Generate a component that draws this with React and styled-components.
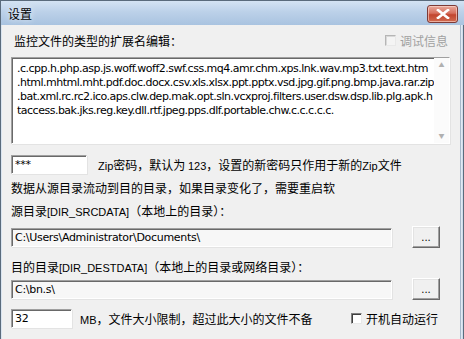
import React from 'react';
import styled, { createGlobalStyle } from 'styled-components';

const GlobalStyle = createGlobalStyle`
  html, body { margin: 0; padding: 0; background: #f0f0f0; }
  body { font-family: "Noto Sans CJK SC", "Liberation Sans", sans-serif; font-size: 12px; color: #000; }
`;

const extLines = [
  '.c.cpp.h.php.asp.js.woff.woff2.swf.css.mq4.amr.chm.xps.lnk.wav.mp3.txt.text.htm',
  '.html.mhtml.mht.pdf.doc.docx.csv.xls.xlsx.ppt.pptx.vsd.jpg.gif.png.bmp.java.rar.zip',
  '.bat.xml.rc.rc2.ico.aps.clw.dep.mak.opt.sln.vcxproj.filters.user.dsw.dsp.lib.plg.apk.h',
  'taccess.bak.jks.reg.key.dll.rtf.jpeg.pps.dlf.portable.chw.c.c.c.c.c.',
];

export default function App() {
  return (
    <>
      <GlobalStyle />
      <Window>
        <TitleBar>
          <Title>设置</Title>
          <CloseButton>
            <svg width="14" height="10" viewBox="0 0 14 10">
              <path d="M2 1 L12 9 M12 1 L2 9" stroke="#fff" strokeWidth="2.6" strokeLinecap="square" />
            </svg>
          </CloseButton>
        </TitleBar>
        <Body>
          <Content>
            <HeaderRow>
              <span>监控文件的类型的扩展名编辑：</span>
              <CheckLabel disabled>
                <Box disabled />
                调试信息
              </CheckLabel>
            </HeaderRow>
            <ExtBox>
              <ExtText>
                {extLines.map((l) => (
                  <div key={l}>{l}</div>
                ))}
              </ExtText>
              <ScrollBar>
                <Arrow>▲</Arrow>
                <Arrow>▼</Arrow>
              </ScrollBar>
            </ExtBox>
            <Row $top={11}>
              <Field $w={76} $white value="***" readOnly />
              <Note $ml={11}>
                <Latin>Zip</Latin>密码，默认为 <Latin>123</Latin>，设置的新密码只作用于新的<Latin>Zip</Latin>文件
              </Note>
            </Row>
            <Line $top={5}>数据从源目录流动到目的目录，如果目录变化了，需要重启软</Line>
            <Line $top={5}>
              源目录<Latin>[DIR_SRCDATA]</Latin>（本地上的目录）：
            </Line>
            <Row $top={6}>
              <Field $w={381} value="C:\Users\Administrator\Documents\" readOnly />
              <DotsButton>...</DotsButton>
            </Row>
            <Line $top={10}>
              目的目录<Latin>[DIR_DESTDATA]</Latin>（本地上的目录或网络目录）：
            </Line>
            <Row $top={2}>
              <Field $w={381} value="C:\bn.s\" readOnly />
              <DotsButton>...</DotsButton>
            </Row>
            <Row $top={9}>
              <Field $w={61} $white value="32" readOnly />
              <Note $ml={8}>
                <Latin>MB</Latin>，文件大小限制，超过此大小的文件不备
              </Note>
              <CheckLabel $ml="auto">
                <Box />
                开机自动运行
              </CheckLabel>
            </Row>
          </Content>
          <RightFrame />
        </Body>
      </Window>
    </>
  );
}

const Window = styled.div`
  width: 464px;
  height: 339px;
  display: flex;
  flex-direction: column;
  overflow: hidden;
  background: #f0f0f0;
  border-left: 1px solid #5a6b7c;
  box-sizing: border-box;
`;

const TitleBar = styled.div`
  height: 25px;
  flex: none;
  display: flex;
  align-items: center;
  justify-content: space-between;
  padding: 0 6px 0 7px;
  background: linear-gradient(180deg, #d4e3f3 0%, #bcd1e9 45%, #a9c3e0 100%);
  border-top: 1px solid #5a6b7c;
  box-sizing: border-box;
`;

const Title = styled.span`
  font-size: 12px;
  color: #000;
  text-shadow: 0 0 6px #fff;
`;

const CloseButton = styled.div`
  width: 29px;
  height: 16px;
  margin-top: 1px;
  display: flex;
  align-items: center;
  justify-content: center;
  border: 1px solid #7d3a36;
  border-radius: 3px;
  background: linear-gradient(180deg, #e9a99c 0%, #d7705e 45%, #c2452f 55%, #d06b50 100%);
  box-shadow: inset 0 0 0 1px rgba(255, 220, 210, 0.6);
`;

const Body = styled.div`
  flex: 1;
  display: flex;
`;

const Content = styled.div`
  flex: 1;
  display: flex;
  flex-direction: column;
  padding: 5px 10px 0 9px;
  border-left: 1px solid #d9e4f0;
`;

const RightFrame = styled.div`
  width: 5px;
  background: linear-gradient(90deg, #e8eef5, #c6d7ea);
  border-left: 1px solid #a7b8cb;
  border-right: 1px solid #5a6b7c;
`;

const HeaderRow = styled.div`
  display: flex;
  align-items: center;
  justify-content: space-between;
  height: 20px;
  padding-left: 3px;
`;

const CheckLabel = styled.label`
  display: flex;
  align-items: center;
  gap: 4px;
  margin-left: ${(p) => p.$ml || 0};
  margin-right: ${(p) => (p.disabled ? '2px' : '12px')};
  color: ${(p) => (p.disabled ? '#a0a0a0' : '#000')};
`;

const Box = styled.span`
  width: 11px;
  height: 11px;
  box-sizing: border-box;
  background: ${(p) => (p.disabled ? '#f4f4f4' : '#fff')};
  border-top: 1px solid ${(p) => (p.disabled ? '#b5b5b5' : '#808080')};
  border-left: 1px solid ${(p) => (p.disabled ? '#b5b5b5' : '#808080')};
  border-right: 1px solid #e8e8e8;
  border-bottom: 1px solid #e8e8e8;
  box-shadow: inset 1px 1px 0 ${(p) => (p.disabled ? '#d8d8d8' : '#404040')};
`;

const ExtBox = styled.div`
  margin-top: 7px;
  height: 87px;
  display: flex;
  background: #fff;
  border-top: 1px solid #a0a0a0;
  border-left: 1px solid #a0a0a0;
  border-right: 1px solid #fff;
  border-bottom: 1px solid #fff;
  box-shadow: inset 1px 1px 0 #696969, 1px 1px 0 #e3e3e3;
  box-sizing: border-box;
  overflow: hidden;
`;

const ExtText = styled.div`
  flex: 1;
  padding: 4px 0 0 5px;
  font-family: "DejaVu Sans", sans-serif;
  font-size: 11px;
  letter-spacing: -0.5px;
  line-height: 14px;
  white-space: nowrap;
  overflow: hidden;
`;

const ScrollBar = styled.div`
  width: 15px;
  display: flex;
  flex-direction: column;
  justify-content: space-between;
  align-items: center;
  padding: 3px 0 3px;
  background: #fbfbfb;
`;

const Arrow = styled.span`
  font-size: 6px;
  color: #b0b0b0;
  line-height: 8px;
`;

const Row = styled.div`
  display: flex;
  align-items: center;
  margin-top: ${(p) => p.$top || 0}px;
`;

const Field = styled.input`
  width: ${(p) => p.$w}px;
  height: 19px;
  box-sizing: border-box;
  margin: 0;
  padding: 0 0 0 3px;
  font-family: "DejaVu Sans", sans-serif;
  font-size: 11px;
  letter-spacing: -0.3px;
  color: #000;
  background: ${(p) => (p.$white ? '#fff' : '#f7f7f7')};
  border-top: 1px solid #a0a0a0;
  border-left: 1px solid #a0a0a0;
  border-right: 1px solid #fff;
  border-bottom: 1px solid #fff;
  box-shadow: inset 1px 1px 0 #696969, 1px 1px 0 #e3e3e3;
  outline: none;
`;

const Note = styled.span`
  margin-left: ${(p) => p.$ml}px;
  white-space: nowrap;
`;

const Latin = styled.span`
  font-family: "Liberation Sans", sans-serif;
  font-size: 11px;
`;

const Line = styled.div`
  margin-top: ${(p) => p.$top}px;
  height: 18px;
  line-height: 18px;
  white-space: nowrap;
`;

const DotsButton = styled.div`
  width: 28px;
  height: 22px;
  margin-left: 20px;
  box-sizing: border-box;
  display: flex;
  align-items: center;
  justify-content: center;
  font-family: "DejaVu Sans", sans-serif;
  font-size: 10px;
  background: #f0f0f0;
  border-top: 1px solid #fff;
  border-left: 1px solid #fff;
  border-right: 1px solid #696969;
  border-bottom: 1px solid #696969;
  box-shadow: inset -1px -1px 0 #a0a0a0, inset 1px 1px 0 #e3e3e3;
`;
